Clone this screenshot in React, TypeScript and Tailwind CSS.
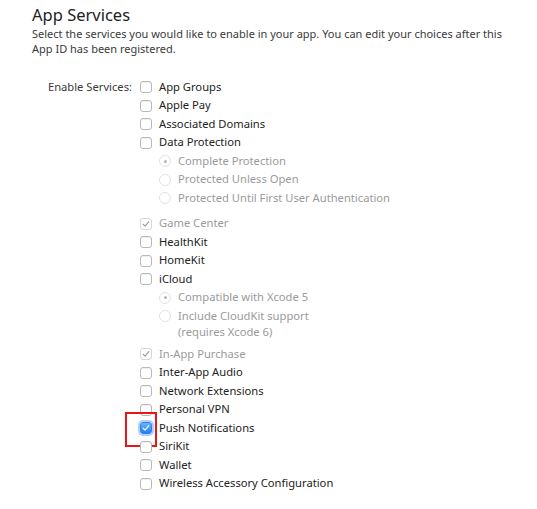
import type { ReactNode } from "react";

type Service = {
  label: string;
  state?: "off" | "on" | "locked";
  options?: { label: ReactNode; selected?: boolean; twoLine?: boolean }[];
  gapAfter?: string;
  highlight?: boolean;
};

const SERVICES: Service[] = [
  { label: "App Groups" },
  { label: "Apple Pay" },
  { label: "Associated Domains" },
  {
    label: "Data Protection",
    options: [
      { label: "Complete Protection", selected: true },
      { label: "Protected Unless Open" },
      { label: "Protected Until First User Authentication" },
    ],
    gapAfter: "mb-[7px]",
  },
  { label: "Game Center", state: "locked" },
  { label: "HealthKit" },
  { label: "HomeKit" },
  {
    label: "iCloud",
    options: [
      { label: "Compatible with Xcode 5", selected: true },
      {
        label: (
          <>
            Include CloudKit support
            <br />
            (requires Xcode 6)
          </>
        ),
        twoLine: true,
      },
    ],
    gapAfter: "mb-[3.5px]",
  },
  { label: "In-App Purchase", state: "locked" },
  { label: "Inter-App Audio" },
  { label: "Network Extensions" },
  { label: "Personal VPN" },
  { label: "Push Notifications", state: "on", highlight: true },
  { label: "SiriKit" },
  { label: "Wallet" },
  { label: "Wireless Accessory Configuration" },
];

function Check({ color }: { color: string }) {
  return (
    <svg viewBox="0 0 12 12" className="h-[10px] w-[10px]" fill="none">
      <path
        d="M2.6 6.3 4.9 8.6 9.4 3.2"
        stroke={color}
        strokeWidth="1.3"
        strokeLinecap="round"
        strokeLinejoin="round"
      />
    </svg>
  );
}

function Checkbox({ state = "off" }: { state?: Service["state"] }) {
  if (state === "on") {
    return (
      <span className="flex h-[12px] w-[12px] shrink-0 items-center justify-center rounded-[3px] border border-[#2f82f0] bg-gradient-to-b from-[#6cb3fa] to-[#1f7ff2] shadow-[0_0_0_2px_rgba(110,170,250,0.55)]">
        <Check color="#ffffff" />
      </span>
    );
  }
  if (state === "locked") {
    return (
      <span className="flex h-[12px] w-[12px] shrink-0 items-center justify-center rounded-[3px] border border-[#d6d6d6] bg-white">
        <Check color="#9a9a9a" />
      </span>
    );
  }
  return (
    <span className="block h-[12px] w-[12px] shrink-0 rounded-[3px] border border-[#b8b8b8] bg-white shadow-[inset_0_1px_0_#f0f0f0]" />
  );
}

function Radio({ selected }: { selected?: boolean }) {
  return (
    <span className="flex h-[12px] w-[12px] items-center justify-center rounded-full border border-[#e2e2e2] bg-white">
      {selected && <span className="h-[3px] w-[3px] rounded-full bg-[#b5b5b5]" />}
    </span>
  );
}

export default function App() {
  return (
    <div
      className="min-h-[509px] w-[537px] bg-white pl-[32px] pt-[4px] text-[#333]"
      style={{ fontFamily: '"Noto Sans", "Liberation Sans", sans-serif' }}
    >
      <h1 className="text-[16.5px] leading-[21px] text-[#222]">App Services</h1>
      <p className="mt-[1px] w-[480px] text-[11px] leading-[15px] text-[#3a3a3a]">
        Select the services you would like to enable in your app. You can edit your choices after
        this App ID has been registered.
      </p>

      <div className="mt-[22px] flex text-[11.2px]">
        <div className="w-[108px] pr-[8px] text-right leading-[18.5px] text-[#3a3a3a]">
          Enable Services:
        </div>
        <ul className="flex flex-col">
          {SERVICES.map((s) => (
            <li key={s.label} className={s.gapAfter}>
              <div className="relative flex h-[18.5px] items-center gap-[7px]">
                <Checkbox state={s.state} />
                <span
                  className={s.state === "locked" ? "text-[#9a9a9a]" : "text-[#222]"}
                >
                  {s.label}
                </span>
                {s.highlight && (
                  <span className="pointer-events-none absolute left-[-15px] top-[-7px] h-[35px] w-[32px] border-2 border-[#e8161b]" />
                )}
              </div>
              {s.options && (
                <ul className="pl-[19px]">
                  {s.options.map((o, i) => (
                    <li
                      key={i}
                      className={
                        o.twoLine
                          ? "flex items-start gap-[7px] py-[1.25px] leading-[16px] text-[#9a9a9a]"
                          : "flex h-[18.5px] items-center gap-[7px] text-[#9a9a9a]"
                      }
                    >
                      <span className={o.twoLine ? "mt-[2px]" : ""}>
                        <Radio selected={o.selected} />
                      </span>
                      <span>{o.label}</span>
                    </li>
                  ))}
                </ul>
              )}
            </li>
          ))}
        </ul>
      </div>
    </div>
  );
}
